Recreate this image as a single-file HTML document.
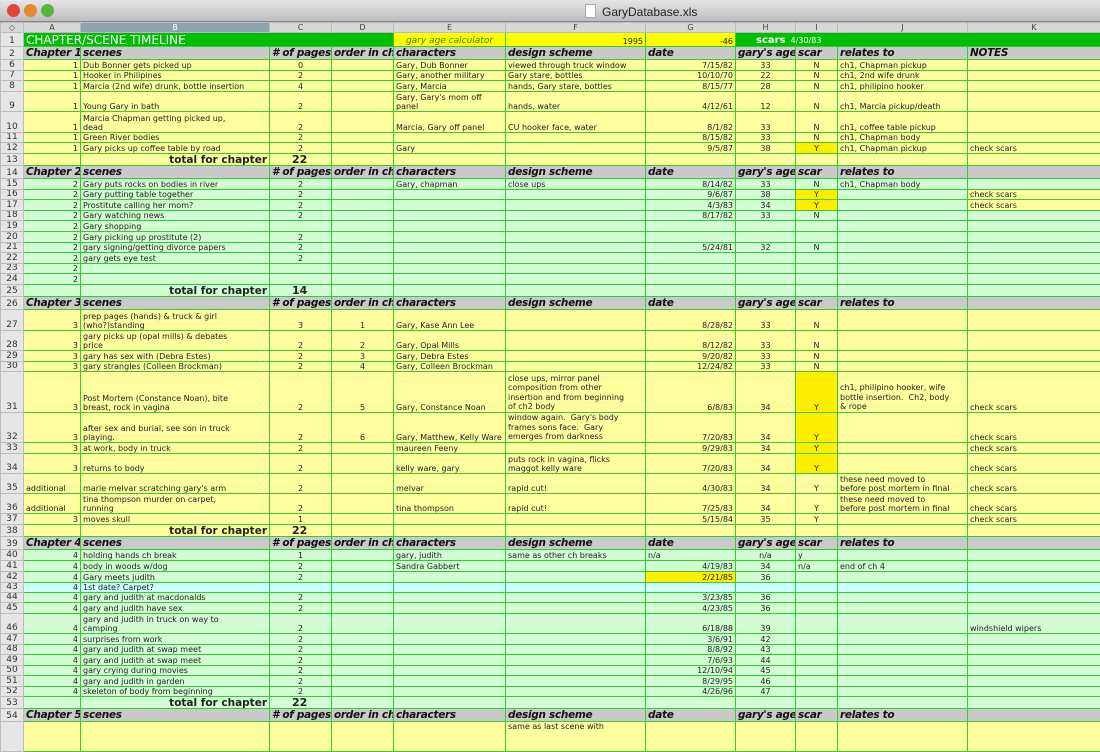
<!DOCTYPE html>
<html><head><meta charset="utf-8"><style>
*{margin:0;padding:0;box-sizing:border-box}
body{width:1100px;height:734px;overflow:hidden;background:#fff;font-family:"DejaVu Sans","Liberation Sans",sans-serif}
#tb{height:22px;background:linear-gradient(#e6e6e6,#bdbdbd);border-bottom:1px solid #888;position:relative}
#tb .l{position:absolute;top:4px;width:13px;height:13px;border-radius:50%}
#tb .t{position:absolute;left:585px;top:4px;font:12px "Liberation Sans",sans-serif;color:#222}
#tb .t:before{content:"";display:inline-block;width:9px;height:12px;background:#fff;border:1px solid #aaa;margin-right:6px;vertical-align:-2px}
table{border-collapse:collapse;table-layout:fixed;width:1100px}
td{border:1px solid #3c3;padding:0 2px;font-size:8px;line-height:9px;vertical-align:bottom;white-space:nowrap;overflow:hidden;color:#222}
td:first-child{background:#e6e6e6;border-color:#bbb;text-align:center;font-size:9px;color:#333;padding:0}
tr.ch td{background:#d8d8d8;border:1px solid #bbb;text-align:center;font-size:8px;line-height:8px;color:#444}
tr.ch td.s{background:#8ea2b2;color:#fff}
tr.y td:not(:first-child){background:#ffffa0}
tr.g td:not(:first-child){background:#d2fcd2}
tr.b td:not(:first-child){background:#ccffff}
tr.h td:not(:first-child){background:#cacaca;font:bold italic 10.5px "DejaVu Sans",sans-serif;line-height:11px;letter-spacing:-0.3px;color:#111}
.r{text-align:right}.c{text-align:center}
td.hl{background:#ffee00!important}
.tot{font:bold 10.5px "DejaVu Sans",sans-serif!important;line-height:10px!important;text-align:right}
.tn{font:bold 11px "DejaVu Sans",sans-serif!important;line-height:10px!important;text-align:left;padding-left:22px}
</style></head><body>
<div id="tb"><span class="l" style="left:7px;background:#e0453a"></span><span class="l" style="left:24px;background:#e58a2a"></span><span class="l" style="left:41px;background:#5ab638"></span><span class="t">GaryDatabase.xls</span></div>
<table>
<colgroup><col style="width:23px"><col style="width:57px"><col style="width:189px"><col style="width:62px"><col style="width:62px"><col style="width:112px"><col style="width:140px"><col style="width:90px"><col style="width:60px"><col style="width:42px"><col style="width:130px"><col style="width:133px"></colgroup>
<tr class="ch" style="height:10px"><td>&#9671;</td><td>A</td><td class="s">B</td><td>C</td><td>D</td><td>E</td><td>F</td><td>G</td><td>H</td><td>I</td><td>J</td><td>K</td></tr>
<tr style="height:14px"><td>1</td><td colspan="4" style="background:#00bf00;color:#fff;font:12px 'DejaVu Sans',sans-serif;line-height:12px">CHAPTER/SCENE TIMELINE</td><td class="c" style="background:#ffff00;color:#3a8a00;font-style:italic;font-size:9px">gary age calculator</td><td class="r" style="background:#ffff00">1995</td><td class="r" style="background:#ffff00">-46</td><td colspan="4" style="background:#00bf00;color:#fff;padding-left:20px;font-size:8px;line-height:11px"><b style="font-size:10px">scars</b>&nbsp; 4/30/83</td></tr>
<tr class="h" style="height:13px"><td>2</td><td class="r">Chapter 1</td><td>scenes</td><td># of pages</td><td>order in ch</td><td>characters</td><td>design scheme</td><td>date</td><td>gary's age</td><td>scar</td><td>relates to</td><td>NOTES</td></tr>
<tr class="y" style="height:11px"><td>6</td><td class="r">1</td><td>Dub Bonner gets picked up</td><td class="c">0</td><td></td><td>Gary, Dub Bonner</td><td>viewed through truck window</td><td class="r">7/15/82</td><td class="c">33</td><td class="c">N</td><td>ch1, Chapman pickup</td><td></td></tr>
<tr class="y" style="height:10px"><td>7</td><td class="r">1</td><td>Hooker in Philipines</td><td class="c">2</td><td></td><td>Gary, another military</td><td>Gary stare, bottles</td><td class="r">10/10/70</td><td class="c">22</td><td class="c">N</td><td>ch1, 2nd wife drunk</td><td></td></tr>
<tr class="y" style="height:11px"><td>8</td><td class="r">1</td><td>Marcia (2nd wife) drunk, bottle insertion</td><td class="c">4</td><td></td><td>Gary, Marcia</td><td>hands, Gary stare, bottles</td><td class="r">8/15/77</td><td class="c">28</td><td class="c">N</td><td>ch1, philipino hooker</td><td></td></tr>
<tr class="y" style="height:20px"><td>9</td><td class="r">1</td><td>Young Gary in bath</td><td class="c">2</td><td></td><td>Gary, Gary's mom off<br>panel</td><td>hands, water</td><td class="r">4/12/61</td><td class="c">12</td><td class="c">N</td><td>ch1, Marcia pickup/death</td><td></td></tr>
<tr class="y" style="height:21px"><td>10</td><td class="r">1</td><td>Marcia Chapman getting picked up,<br>dead</td><td class="c">2</td><td></td><td>Marcia, Gary off panel</td><td>CU hooker face, water</td><td class="r">8/1/82</td><td class="c">33</td><td class="c">N</td><td>ch1, coffee table pickup</td><td></td></tr>
<tr class="y" style="height:10px"><td>11</td><td class="r">1</td><td>Green River bodies</td><td class="c">2</td><td></td><td></td><td></td><td class="r">8/15/82</td><td class="c">33</td><td class="c">N</td><td>ch1, Chapman body</td><td></td></tr>
<tr class="y" style="height:11px"><td>12</td><td class="r">1</td><td>Gary picks up coffee table by road</td><td class="c">2</td><td></td><td>Gary</td><td></td><td class="r">9/5/87</td><td class="c">38</td><td class="c hl">Y</td><td>ch1, Chapman pickup</td><td>check scars</td></tr>
<tr class="y" style="height:12px"><td>13</td><td></td><td class="tot">total for chapter</td><td class="tn">22</td><td></td><td></td><td></td><td></td><td></td><td></td><td></td><td></td></tr>
<tr class="h" style="height:13px"><td>14</td><td class="r">Chapter 2</td><td>scenes</td><td># of pages</td><td>order in ch</td><td>characters</td><td>design scheme</td><td>date</td><td>gary's age</td><td>scar</td><td>relates to</td><td></td></tr>
<tr class="g" style="height:11px"><td>15</td><td class="r">2</td><td>Gary puts rocks on bodies in river</td><td class="c">2</td><td></td><td>Gary, chapman</td><td>close ups</td><td class="r">8/14/82</td><td class="c">33</td><td class="c">N</td><td>ch1, Chapman body</td><td></td></tr>
<tr class="g" style="height:10px"><td>16</td><td class="r">2</td><td>Gary putting table together</td><td class="c">2</td><td></td><td></td><td></td><td class="r">9/6/87</td><td class="c">38</td><td class="c hl">Y</td><td></td><td style="background:#ffffa0">check scars</td></tr>
<tr class="g" style="height:11px"><td>17</td><td class="r">2</td><td>Prostitute calling her mom?</td><td class="c">2</td><td></td><td></td><td></td><td class="r">4/3/83</td><td class="c">34</td><td class="c hl">Y</td><td></td><td style="background:#ffffa0">check scars</td></tr>
<tr class="g" style="height:10px"><td>18</td><td class="r">2</td><td>Gary watching news</td><td class="c">2</td><td></td><td></td><td></td><td class="r">8/17/82</td><td class="c">33</td><td class="c">N</td><td></td><td></td></tr>
<tr class="g" style="height:11px"><td>19</td><td class="r">2</td><td>Gary shopping</td><td></td><td></td><td></td><td></td><td></td><td></td><td></td><td></td><td></td></tr>
<tr class="g" style="height:11px"><td>20</td><td class="r">2</td><td>Gary picking up prostitute (2)</td><td class="c">2</td><td></td><td></td><td></td><td></td><td></td><td></td><td></td><td></td></tr>
<tr class="g" style="height:10px"><td>21</td><td class="r">2</td><td>gary signing/getting divorce papers</td><td class="c">2</td><td></td><td></td><td></td><td class="r">5/24/81</td><td class="c">32</td><td class="c">N</td><td></td><td></td></tr>
<tr class="g" style="height:11px"><td>22</td><td class="r">2</td><td>gary gets eye test</td><td class="c">2</td><td></td><td></td><td></td><td></td><td></td><td></td><td></td><td></td></tr>
<tr class="g" style="height:10px"><td>23</td><td class="r">2</td><td></td><td></td><td></td><td></td><td></td><td></td><td></td><td></td><td></td><td></td></tr>
<tr class="g" style="height:11px"><td>24</td><td class="r">2</td><td></td><td></td><td></td><td></td><td></td><td></td><td></td><td></td><td></td><td></td></tr>
<tr class="g" style="height:12px"><td>25</td><td></td><td class="tot">total for chapter</td><td class="tn">14</td><td></td><td></td><td></td><td></td><td></td><td></td><td></td><td></td></tr>
<tr class="h" style="height:13px"><td>26</td><td class="r">Chapter 3</td><td>scenes</td><td># of pages</td><td>order in ch</td><td>characters</td><td>design scheme</td><td>date</td><td>gary's age</td><td>scar</td><td>relates to</td><td></td></tr>
<tr class="y" style="height:21px"><td>27</td><td class="r">3</td><td>prep pages (hands) &amp; truck &amp; girl<br>(who?)standing</td><td class="c">3</td><td class="c">1</td><td>Gary, Kase Ann Lee</td><td></td><td class="r">8/28/82</td><td class="c">33</td><td class="c">N</td><td></td><td></td></tr>
<tr class="y" style="height:20px"><td>28</td><td class="r">3</td><td>gary picks up (opal mills) &amp; debates<br>price</td><td class="c">2</td><td class="c">2</td><td>Gary, Opal Mills</td><td></td><td class="r">8/12/82</td><td class="c">33</td><td class="c">N</td><td></td><td></td></tr>
<tr class="y" style="height:11px"><td>29</td><td class="r">3</td><td>gary has sex with (Debra Estes)</td><td class="c">2</td><td class="c">3</td><td>Gary, Debra Estes</td><td></td><td class="r">9/20/82</td><td class="c">33</td><td class="c">N</td><td></td><td></td></tr>
<tr class="y" style="height:10px"><td>30</td><td class="r">3</td><td>gary strangles (Colleen Brockman)</td><td class="c">2</td><td class="c">4</td><td>Gary, Colleen Brockman</td><td></td><td class="r">12/24/82</td><td class="c">33</td><td class="c">N</td><td></td><td></td></tr>
<tr class="y" style="height:41px"><td>31</td><td class="r">3</td><td>Post Mortem (Constance Noan), bite<br>breast, rock in vagina</td><td class="c">2</td><td class="c">5</td><td>Gary, Constance Noan</td><td style="line-height:9.6px">close ups, mirror panel<br>composition from other<br>insertion and from beginning<br>of ch2 body</td><td class="r">6/8/83</td><td class="c">34</td><td class="c hl">Y</td><td style="line-height:9.6px">ch1, philipino hooker, wife<br>bottle insertion.&nbsp; Ch2, body<br>&amp; rope</td><td>check scars</td></tr>
<tr class="y" style="height:29px"><td>32</td><td class="r">3</td><td>after sex and burial, see son in truck<br>playing.</td><td class="c">2</td><td class="c">6</td><td>Gary, Matthew, Kelly Ware</td><td style="line-height:9.6px">window again.&nbsp; Gary's body<br>frames sons face.&nbsp; Gary<br>emerges from darkness</td><td class="r">7/20/83</td><td class="c">34</td><td class="c hl">Y</td><td></td><td>check scars</td></tr>
<tr class="y" style="height:11px"><td>33</td><td class="r">3</td><td>at work, body in truck</td><td class="c">2</td><td></td><td>maureen Feeny</td><td></td><td class="r">9/29/83</td><td class="c">34</td><td class="c hl">Y</td><td></td><td>check scars</td></tr>
<tr class="y" style="height:20px"><td>34</td><td class="r">3</td><td>returns to body</td><td class="c">2</td><td></td><td>kelly ware, gary</td><td>puts rock in vagina, flicks<br>maggot kelly ware</td><td class="r">7/20/83</td><td class="c">34</td><td class="c hl">Y</td><td></td><td>check scars</td></tr>
<tr class="y" style="height:20px"><td>35</td><td>additional</td><td>marie melvar scratching gary's arm</td><td class="c">2</td><td></td><td>melvar</td><td>rapid cut!</td><td class="r">4/30/83</td><td class="c">34</td><td class="c">Y</td><td>these need moved to<br>before post mortem in final</td><td>check scars</td></tr>
<tr class="y" style="height:20px"><td>36</td><td>additional</td><td>tina thompson murder on carpet,<br>running</td><td class="c">2</td><td></td><td>tina thompson</td><td>rapid cut!</td><td class="r">7/25/83</td><td class="c">34</td><td class="c">Y</td><td>these need moved to<br>before post mortem in final</td><td>check scars</td></tr>
<tr class="y" style="height:11px"><td>37</td><td class="r">3</td><td>moves skull</td><td class="c">1</td><td></td><td></td><td></td><td class="r">5/15/84</td><td class="c">35</td><td class="c">Y</td><td></td><td>check scars</td></tr>
<tr class="y" style="height:12px"><td>38</td><td></td><td class="tot">total for chapter</td><td class="tn">22</td><td></td><td></td><td></td><td></td><td></td><td></td><td></td><td></td></tr>
<tr class="h" style="height:13px"><td>39</td><td class="r">Chapter 4</td><td>scenes</td><td># of pages</td><td>order in ch</td><td>characters</td><td>design scheme</td><td>date</td><td>gary's age</td><td>scar</td><td>relates to</td><td></td></tr>
<tr class="g" style="height:11px"><td>40</td><td class="r">4</td><td>holding hands ch break</td><td class="c">1</td><td></td><td>gary, judith</td><td>same as other ch breaks</td><td>n/a</td><td class="c">n/a</td><td>y</td><td></td><td></td></tr>
<tr class="g" style="height:11px"><td>41</td><td class="r">4</td><td>body in woods w/dog</td><td class="c">2</td><td></td><td>Sandra Gabbert</td><td></td><td class="r">4/19/83</td><td class="c">34</td><td>n/a</td><td>end of ch 4</td><td></td></tr>
<tr class="g" style="height:11px"><td>42</td><td class="r">4</td><td>Gary meets judith</td><td class="c">2</td><td></td><td></td><td></td><td class="r hl">2/21/85</td><td class="c">36</td><td></td><td></td><td></td></tr>
<tr class="b" style="height:10px"><td>43</td><td class="r">4</td><td>1st date? Carpet?</td><td></td><td></td><td></td><td></td><td></td><td></td><td></td><td></td><td></td></tr>
<tr class="g" style="height:10px"><td>44</td><td class="r">4</td><td>gary and judith at macdonalds</td><td class="c">2</td><td></td><td></td><td></td><td class="r">3/23/85</td><td class="c">36</td><td></td><td></td><td></td></tr>
<tr class="g" style="height:11px"><td>45</td><td class="r">4</td><td>gary and judith have sex</td><td class="c">2</td><td></td><td></td><td></td><td class="r">4/23/85</td><td class="c">36</td><td></td><td></td><td></td></tr>
<tr class="g" style="height:20px"><td>46</td><td class="r">4</td><td>gary and judith in truck on way to<br>camping</td><td class="c">2</td><td></td><td></td><td></td><td class="r">6/18/88</td><td class="c">39</td><td></td><td></td><td>windshield wipers</td></tr>
<tr class="g" style="height:11px"><td>47</td><td class="r">4</td><td>surprises from work</td><td class="c">2</td><td></td><td></td><td></td><td class="r">3/6/91</td><td class="c">42</td><td></td><td></td><td></td></tr>
<tr class="g" style="height:10px"><td>48</td><td class="r">4</td><td>gary and judith at swap meet</td><td class="c">2</td><td></td><td></td><td></td><td class="r">8/8/92</td><td class="c">43</td><td></td><td></td><td></td></tr>
<tr class="g" style="height:11px"><td>49</td><td class="r">4</td><td>gary and judith at swap meet</td><td class="c">2</td><td></td><td></td><td></td><td class="r">7/6/93</td><td class="c">44</td><td></td><td></td><td></td></tr>
<tr class="g" style="height:10px"><td>50</td><td class="r">4</td><td>gary crying during movies</td><td class="c">2</td><td></td><td></td><td></td><td class="r">12/10/94</td><td class="c">45</td><td></td><td></td><td></td></tr>
<tr class="g" style="height:11px"><td>51</td><td class="r">4</td><td>gary and judith in garden</td><td class="c">2</td><td></td><td></td><td></td><td class="r">8/29/95</td><td class="c">46</td><td></td><td></td><td></td></tr>
<tr class="g" style="height:10px"><td>52</td><td class="r">4</td><td>skeleton of body from beginning</td><td class="c">2</td><td></td><td></td><td></td><td class="r">4/26/96</td><td class="c">47</td><td></td><td></td><td></td></tr>
<tr class="g" style="height:12px"><td>53</td><td></td><td class="tot">total for chapter</td><td class="tn">22</td><td></td><td></td><td></td><td></td><td></td><td></td><td></td><td></td></tr>
<tr class="h" style="height:13px"><td>54</td><td class="r">Chapter 5</td><td>scenes</td><td># of pages</td><td>order in ch</td><td>characters</td><td>design scheme</td><td>date</td><td>gary's age</td><td>scar</td><td>relates to</td><td></td></tr>
<tr class="y" style="height:30px"><td></td><td></td><td></td><td></td><td></td><td></td><td style="vertical-align:top">same as last scene with</td><td></td><td></td><td></td><td></td><td></td></tr>
</table>
</body></html>
